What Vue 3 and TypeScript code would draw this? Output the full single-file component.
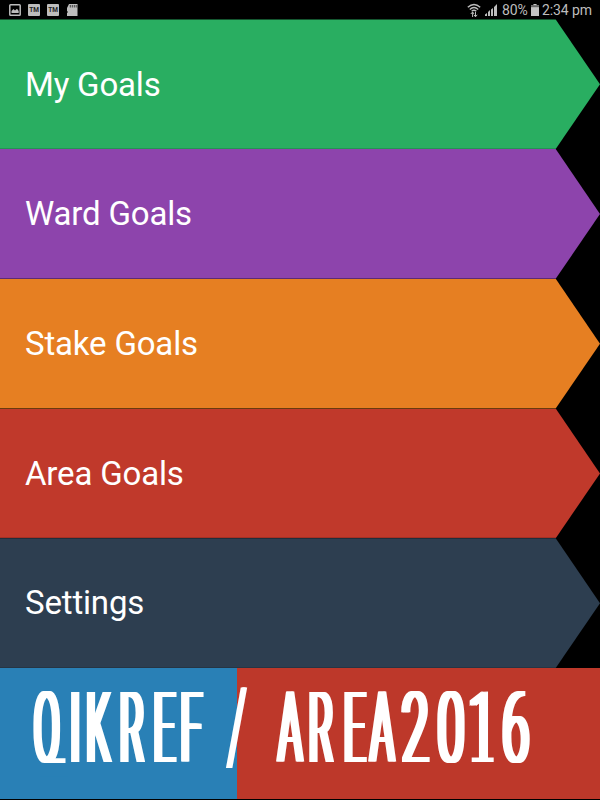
<script setup lang="ts">
interface MenuItem { label: string; tone: string }
interface Lettering { text: string; scale: number; left: number[]; cls: string }

const items: MenuItem[] = [
  { label: 'My Goals', tone: 'green' },
  { label: 'Ward Goals', tone: 'purple' },
  { label: 'Stake Goals', tone: 'orange' },
  { label: 'Area Goals', tone: 'red' },
  { label: 'Settings', tone: 'navy' },
]

// Condensed lettering: each run is narrowed, with the glyphs set at fixed left edges.
const lettering: Lettering[] = [
  { text: 'QIKREF', scale: 0.38, left: [31.2, 67.3, 83.5, 117, 150.8, 177.8], cls: 'caps' },
  { text: 'AREA', scale: 0.38, left: [275.5, 306, 341, 367.5], cls: 'caps' },
  { text: '2016', scale: 0.49, left: [398.7, 434.5, 465.6, 499.2], cls: 'digits' },
]
const xs = (l: Lettering): string => l.left.map((v) => (v / l.scale).toFixed(1)).join(' ')
</script>

<template>
  <main class="screen">
    <header class="status">
      <div class="notices">
        <svg class="notice" viewBox="0 0 12 12"><rect x=".8" y=".8" width="10.4" height="10.4" rx=".8" fill="none" stroke="#bdbdbd" stroke-width="1.5" /><path d="M2.5 9V7l2-2 1.5 1.5L8 4.8 9.7 7v2z" fill="#bdbdbd" /></svg>
        <span class="tm">TM</span>
        <span class="tm">TM</span>
        <svg class="notice" viewBox="0 0 12 12"><path d="M3 0h8.5v12H1V9l1-1-1-1V4z" fill="#bdbdbd" /><path d="M4.3 1v2.5M6.3 1v2.5M8.3 1v2.5M10.2 1v2.5" stroke="#222" stroke-width=".8" /></svg>
      </div>
      <div class="system">
        <svg class="wifi" viewBox="0 0 14 14"><g fill="none" stroke="#bdbdbd" stroke-width="1.4"><path d="M.8 4.3Q7-1.4 13.2 4.3M2.8 6.4Q7 2.6 11.2 6.4M4.7 8.3Q7 6.3 9.3 8.3" /></g><path d="M5.6 9v5M3.8 11l1.8-2 1.4 2M8.5 9v4.5M7 11.8l1.5 2 1.7-2" fill="none" stroke="#bdbdbd" stroke-width="1" /></svg>
        <svg class="signal" viewBox="0 0 12 12"><path d="M0 12v-1.5L2 9v3zM3 12V8l2-2v6zM6 12V5.5L8 4v8zM9 12V3l3-3v12z" fill="#bdbdbd" /></svg>
        <span class="percent">80%</span>
        <svg class="battery" viewBox="0 0 8 12"><path d="M2.4 0h3.2v1.2H8V12H0V1.2h2.4z" fill="#c4c4c4" /><path d="M0 1.2h8v2H0z" fill="#666" /></svg>
        <span class="clock">2:34 pm</span>
      </div>
    </header>

    <nav class="menu">
      <a v-for="item in items" :key="item.label" class="item" :class="item.tone">
        <span class="label">{{ item.label }}</span>
      </a>
    </nav>

    <footer class="banner">
      <svg class="title" viewBox="0 0 600 131">
        <text v-for="l in lettering" :key="l.text" :class="l.cls" y="94" :x="xs(l)" :transform="`scale(${l.scale} 1)`">{{ l.text }}</text>
        <text class="slash" transform="translate(225.5 93.5) scale(.48 1)">/</text>
        <!-- Flat foot of the Q and of the 1 -->
        <path class="mask" d="M40 94.9h28v14H40z" />
        <path d="M44 90.3h21.5v4.6H44zM471.7 89.5h22V94h-22z" />
      </svg>
    </footer>
  </main>
</template>

<style>
body { margin: 0; background: #000; }
</style>

<style scoped>
.screen { display: flex; flex-direction: column; width: 600px; height: 800px; overflow: hidden; background: #000; font-family: Roboto, "Liberation Sans", sans-serif; }
.status { display: flex; flex: none; justify-content: space-between; height: 19.4px; padding: 0 7px 0 9px; box-sizing: border-box; color: #bdbdbd; }
.notices { display: flex; gap: 7px; padding-top: 4px; }
.notice { width: 12px; height: 12px; }
.tm { width: 12px; height: 12px; border-radius: 1px; background: #bdbdbd; color: #222; font: 700 6.5px/12px Roboto, sans-serif; text-align: center; }
.system { display: flex; align-items: flex-start; font-size: 14px; line-height: 20px; white-space: nowrap; }
.wifi { width: 14px; height: 14px; margin: 3px 4px 0 0; }
.signal { width: 12px; height: 12px; margin: 4px 5px 0 0; }
.percent { width: 27px; letter-spacing: -.1px; }
.battery { width: 8px; height: 12px; margin: 4px 3px 0 2px; }
.clock { width: 51px; letter-spacing: -.1px; }
.menu { display: grid; flex: none; grid-template-rows: repeat(5, 1fr); height: 648.6px; }
.item { display: flex; align-items: center; padding-left: 25px; box-sizing: border-box; box-shadow: inset 0 -1px rgba(0, 0, 0, .14); clip-path: polygon(0 0, 555.7px 0, 600px 50%, 555.7px 100%, 0 100%); color: #fff; }
.label { padding-top: .5px; font-size: 33px; line-height: 40px; letter-spacing: -.17px; }
.green { background: #29ae61; }
.purple { background: #8d44ac; }
.orange { background: #e67f22; }
.red { background: #c0392b; }
.navy { background: #2d3e50; }
.banner { flex: none; height: 131px; background: linear-gradient(90deg, #2980b6 237.5px, #bd382a 237.5px); }
.title { display: block; width: 600px; height: 131px; overflow: visible; fill: #fff; }
.caps, .digits { font-size: 98px; font-weight: 300; }
.caps { text-shadow: 2.5px 0 #fff, 5px 0 #fff, 7.5px 0 #fff, 10px 0 #fff, 12px 0 #fff; }
.digits { text-shadow: 2px 0 #fff, 4px 0 #fff, 6px 0 #fff, 8px 0 #fff, 10px 0 #fff; }
.slash { font-size: 104px; font-weight: 400; text-shadow: 2px 0 #fff, 4px 0 #fff; }
.mask { fill: #2980b6; }
</style>
